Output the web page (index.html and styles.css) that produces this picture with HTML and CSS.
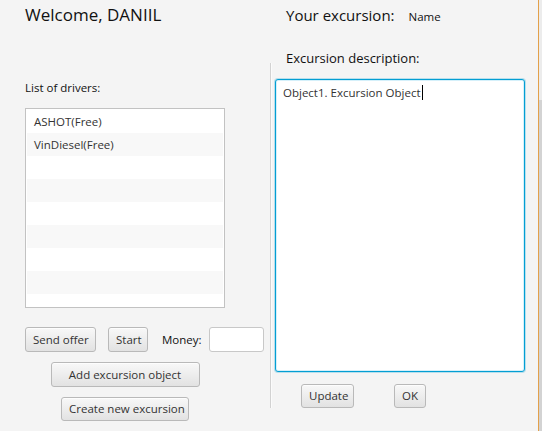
FILE: index.html
```html
<!DOCTYPE html>
<html>
<head>
<meta charset="utf-8">
<link rel="stylesheet" href="styles.css">
</head>
<body>
<div class="window">
  <div class="main">
    <section class="left">
      <h1 class="welcome">Welcome, DANIIL</h1>
      <div class="label drivers-label">List of drivers:</div>
      <ul class="list">
        <li class="row">ASHOT(Free)</li>
        <li class="row odd">VinDiesel(Free)</li>
        <li class="row"></li>
        <li class="row odd"></li>
        <li class="row"></li>
        <li class="row odd"></li>
        <li class="row"></li>
        <li class="row odd"></li>
        <li class="row last"></li>
      </ul>
      <div class="actions">
        <button class="btn btn-send">Send offer</button>
        <button class="btn btn-start">Start</button>
        <span class="label money-label">Money:</span>
        <div class="field"></div>
      </div>
      <div class="centered">
        <button class="btn btn-add">Add excursion object</button>
        <button class="btn btn-create">Create new excursion</button>
      </div>
    </section>
    <div class="divider"></div>
    <section class="right">
      <div class="head-row">
        <span class="head">Your excursion:</span>
        <span class="name">Name</span>
      </div>
      <div class="desc-label">Excursion description:</div>
      <div class="textarea"><span class="ta-text">Object1. Excursion Object</span><span class="caret"></span></div>
      <div class="bottom-actions">
        <button class="btn btn-update">Update</button>
        <button class="btn btn-ok">OK</button>
      </div>
    </section>
  </div>
  <div class="edge"></div>
</div>
</body>
</html>
```
FILE: styles.css
```css
* { box-sizing: border-box; }
html, body { margin: 0; padding: 0; }
body {
  width: 542px;
  height: 431px;
  overflow: hidden;
  background: #f4f4f4;
  font-family: "Open Sans", "Noto Sans", sans-serif;
  color: #333;
}
.window { display: flex; width: 542px; height: 431px; }
.main { display: flex; width: 538px; height: 431px; }
.left { width: 270px; padding-left: 25px; display: flex; flex-direction: column; }
.welcome {
  margin: 5px 0 0 0;
  font-size: 17px;
  line-height: 20px;
  font-weight: 400;
  color: #111;
  height: 20px;
  white-space: nowrap;
}
.label { font-size: 11.5px; color: #111; }
.drivers-label { margin-top: 55px; line-height: 16px; height: 16px; }
.list {
  list-style: none;
  margin: 12px 0 0 0;
  padding: 1px;
  width: 200px;
  height: 200px;
  border: 1px solid #c2c2c2;
  background: #fff;
  overflow: hidden;
}
.row {
  height: 23px;
  line-height: 23px;
  padding-left: 7px;
  font-size: 11.5px;
  color: #333;
  background: #fff;
}
.row.odd { background: #f8f8f8; }
.actions {
  margin-top: 19px;
  display: flex;
  align-items: center;
  height: 25px;
  width: 240px;
}
.btn {
  font-family: inherit;
  font-size: 11.5px;
  color: #333;
  height: 25px;
  padding: 0 7px;
  border: 1px solid #b9b9b9;
  border-radius: 3px;
  background: linear-gradient(#f8f8f8, #e2e2e2);
  box-shadow: inset 0 1px 0 #fdfdfd;
  white-space: nowrap;
  line-height: 22px;
}
.btn-send { width: 71px; }
.btn-start { width: 40px; margin-left: 12px; }
.money-label { margin-left: 14px; width: 39px; }
.field {
  margin-left: 8px;
  width: 55px;
  height: 25px;
  background: #fff;
  border: 1px solid #c8c8c8;
  border-radius: 3px;
}
.centered { width: 200px; display: flex; flex-direction: column; align-items: center; }
.btn-add { margin-top: 10px; width: 149px; }
.btn-create { margin-top: 10px; width: 128px; height: 24px; }
.divider {
  width: 2px;
  margin-top: 63px;
  height: 345px;
  border-left: 1px solid #d2d2d2;
  border-right: 1px solid #fbfbfb;
}
.right { width: 266px; padding-left: 3px; display: flex; flex-direction: column; }
.head-row { margin-top: 5px; padding-left: 11px; height: 20px; display: flex; align-items: baseline; white-space: nowrap; }
.head { font-size: 15px; line-height: 20px; color: #111; }
.name { margin-left: 14px; font-size: 11.5px; color: #111; }
.desc-label {
  margin-top: 23px;
  padding-left: 11px;
  height: 20px;
  font-size: 13px;
  line-height: 20px;
  color: #111;
  white-space: nowrap;
}
.textarea {
  margin-top: 11px;
  width: 250px;
  height: 293px;
  background: #fff;
  border: 1px solid #039ed3;
  border-radius: 3px;
  box-shadow: inset 0 0 0 1px #d5f0fa, 0 0 0 1px rgba(3, 158, 211, 0.25);
  padding: 5px 7px;
  font-size: 11.5px;
  line-height: 16px;
  color: #333;
  display: flex;
  align-items: flex-start;
}
.caret { display: inline-block; width: 1px; height: 15px; background: #000; margin-left: 1px; }
.bottom-actions { margin-top: 12px; display: flex; height: 24px; }
.btn-update { margin-left: 26px; width: 53px; height: 24px; }
.btn-ok { margin-left: 40px; width: 32px; height: 24px; }
.edge {
  width: 4px;
  height: 431px;
  border-left: 1px solid #e3a04a;
  background: linear-gradient(#ececec 0 100px, #d3d3d3 100px);
}
```
